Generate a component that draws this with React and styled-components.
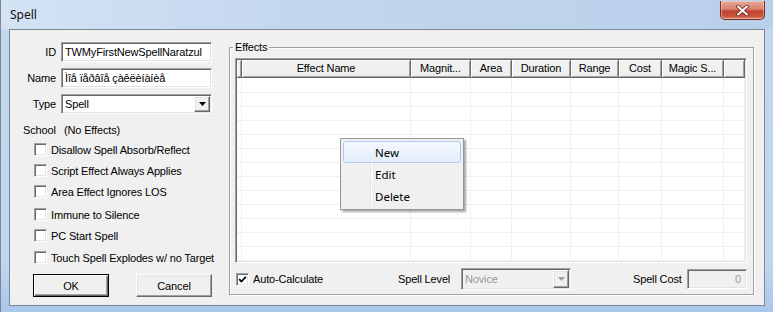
import React from 'react';
import styled, { createGlobalStyle } from 'styled-components';

const Global = createGlobalStyle`
  html, body { margin: 0; padding: 0; overflow: hidden; background: #fff; }
  body { font-family: "Liberation Sans", Arial, sans-serif; font-size: 11px; letter-spacing: -0.15px; color: #000; }
  * { box-sizing: border-box; }
`;

const Window = styled.div`
  position: relative;
  width: 773px;
  height: 312px;
  background: linear-gradient(to bottom, #c5d8ef 0%, #c0d5ee 85%, #a9c7ec 100%);
  border-left: 1px solid #7b8797;
  display: flex;
  flex-direction: column;
  overflow: hidden;
`;

const TitleBar = styled.div`
  height: 29px;
  flex: none;
  display: flex;
  align-items: flex-start;
  background: linear-gradient(to right, #d4e3f4, #c2d6ee 40%, #bad0ea);
`;

const TitleText = styled.div`
  margin: 7px 0 0 9px;
  font-family: "Noto Sans", "Open Sans", sans-serif;
  font-size: 12px;
  letter-spacing: 0;
  line-height: 16px;
  color: #111;
`;

const CloseButton = styled.div`
  margin: 1px 8px 0 auto;
  width: 45px;
  height: 19px;
  border: 1px solid #7a2b22;
  border-top: none;
  border-radius: 0 0 5px 5px;
  background: linear-gradient(to bottom, #e8a996 0%, #d7826f 45%, #c2432f 55%, #c9553f 85%, #d98a6f 100%);
  box-shadow: inset 0 0 0 1px rgba(255, 255, 255, 0.35);
  display: flex;
  align-items: center;
  justify-content: center;
`;

const Client = styled.div`
  margin: 0 8px 0 8px;
  height: 277px;
  border: 1px solid #7d8796;
  background: #f0f0f0;
  display: flex;
  flex: none;
`;

const LeftCol = styled.div`
  width: 219px;
  flex: none;
  display: flex;
  flex-direction: column;
`;

const FormRow = styled.div`
  display: grid;
  grid-template-columns: 46px 151px;
  column-gap: 5px;
  align-items: center;
  margin-top: ${(p) => p.$mt}px;
`;

const Label = styled.div`
  text-align: ${(p) => (p.$align || 'left')};
  line-height: 13px;
  white-space: nowrap;
`;

const Sunken = styled.div`
  position: relative;
  height: ${(p) => p.$h || 20}px;
  border: 1px solid;
  border-color: #a0a0a0 #ffffff #ffffff #a0a0a0;
  box-shadow: inset 1px 1px 0 #696969, inset -1px -1px 0 #e3e3e3;
  background: ${(p) => (p.$disabled ? '#f0f0f0' : '#ffffff')};
  color: ${(p) => (p.$disabled ? '#999' : '#000')};
  display: flex;
  align-items: center;
  justify-content: ${(p) => (p.$right ? 'flex-end' : 'flex-start')};
  padding: ${(p) => (p.$right ? '0 5px 0 0' : '0 0 0 3px')};
  white-space: nowrap;
  overflow: hidden;
`;

const DropBtn = styled.div`
  position: absolute;
  right: 1px;
  top: 1px;
  bottom: 1px;
  width: 16px;
  background: #f0f0f0;
  border: 1px solid;
  border-color: #ffffff #696969 #696969 #ffffff;
  box-shadow: inset -1px -1px 0 #a0a0a0, inset 1px 1px 0 #e3e3e3;
  display: flex;
  align-items: center;
  justify-content: center;
`;

const SchoolLine = styled.div`
  margin-top: 10px;
  padding-left: 13px;
  height: 13px;
  line-height: 13px;
  display: flex;
`;

const SchoolKey = styled.span`
  width: 41px;
`;

const CheckRow = styled.div`
  display: flex;
  align-items: center;
  gap: 4px;
  height: 13px;
  padding-left: ${(p) => p.$pl ?? 24}px;
  margin-top: ${(p) => p.$mt || 0}px;
  white-space: nowrap;
`;

const Box = styled.span`
  width: 13px;
  height: 13px;
  flex: none;
  border: 1px solid;
  border-color: #a0a0a0 #ffffff #ffffff #a0a0a0;
  box-shadow: inset 1px 1px 0 #696969, inset -1px -1px 0 #e3e3e3;
  background: #fff;
  display: flex;
  align-items: center;
  justify-content: center;
`;

const ButtonRow = styled.div`
  display: flex;
  gap: 27px;
  padding-left: 23px;
  margin-top: 10px;
`;

const Button = styled.div`
  width: 76px;
  height: 23px;
  display: flex;
  align-items: center;
  justify-content: center;
  background: #f0f0f0;
  border: 1px solid;
  border-color: ${(p) => (p.$default ? '#000' : '#fff #696969 #696969 #fff')};
  box-shadow: ${(p) =>
    p.$default
      ? 'inset 1px 1px 0 #fff, inset -1px -1px 0 #696969, inset -2px -2px 0 #a0a0a0'
      : 'inset -1px -1px 0 #a0a0a0, inset 1px 1px 0 #e3e3e3'};
`;

const Group = styled.div`
  position: relative;
  margin-top: 17px;
  width: 525px;
  height: 248px;
  border: 1px solid #a0a0a0;
  box-shadow: inset 1px 1px 0 #fff, 1px 1px 0 #fff;
  padding: 10px 6px 0 5px;
  display: flex;
  flex-direction: column;
`;

const GroupLabel = styled.div`
  position: absolute;
  top: -7px;
  left: 3px;
  padding: 0 2px;
  background: #f0f0f0;
  line-height: 13px;
`;

const Table = styled.div`
  width: 512px;
  height: 205px;
  border: 1px solid;
  border-color: #a0a0a0 #ffffff #ffffff #a0a0a0;
  box-shadow: inset 1px 1px 0 #696969, inset -1px -1px 0 #e3e3e3;
  background: #fff;
  padding: 1px;
  overflow: hidden;
`;

const COLS = '5px 169px 60px 41px 59px 48px 43px 62px 1fr';

const HeaderRow = styled.div`
  display: grid;
  grid-template-columns: ${COLS};
  height: 18px;
`;

const HeadCell = styled.div`
  background: #f0f0f0;
  border-right: 1px solid #696969;
  border-bottom: 1px solid #696969;
  box-shadow: inset 1px 1px 0 #fff, inset -1px -1px 0 #a0a0a0;
  display: flex;
  align-items: center;
  justify-content: center;
  white-space: nowrap;
  overflow: hidden;
  line-height: 13px;
`;

const BodyRow = styled.div`
  display: grid;
  grid-template-columns: ${COLS};
  height: ${(p) => p.$h}px;
`;

const BodyCell = styled.div`
  border-right: 1px solid #f0f0f0;
  border-bottom: 1px solid #f0f0f0;
`;

const BottomRow = styled.div`
  margin-top: 5px;
  height: 22px;
  display: grid;
  grid-template-columns: 163px 63px 110px 1fr 54px 60px;
  align-items: center;
`;

const Menu = styled.div`
  position: absolute;
  left: 339px;
  top: 138px;
  width: 124px;
  height: 72px;
  background: #f0f0f0;
  border: 1px solid #979797;
  box-shadow: 2px 2px 2px rgba(0, 0, 0, 0.35);
  padding: 2px;
  display: flex;
  flex-direction: column;
  &::before {
    content: '';
    position: absolute;
    left: 29px;
    top: 2px;
    bottom: 2px;
    width: 1px;
    background: #e2e3e3;
    box-shadow: 1px 0 0 #fff;
  }
`;

const MenuItem = styled.div`
  position: relative;
  z-index: 1;
  height: 22px;
  display: flex;
  align-items: center;
  padding-left: 31px;
  font-family: "Noto Sans", "Open Sans", sans-serif;
  font-size: 11.5px;
  letter-spacing: 0;
  border: 1px solid ${(p) => (p.$hot ? '#aecbef' : 'transparent')};
  border-radius: 3px;
  background: ${(p) => (p.$hot ? 'linear-gradient(to bottom, #f5f9fe, #e3edfa)' : 'transparent')};
`;

const Arrow = ({ color = '#000' }) => (
  <svg width="7" height="4" viewBox="0 0 7 4">
    <polygon points="0,0 7,0 3.5,4" fill={color} />
  </svg>
);

const CheckBox = ({ checked }) => (
  <Box>
    {checked && (
      <svg width="9" height="9" viewBox="0 0 9 9">
        <polyline points="1.2,4.2 3.4,6.5 7.8,1.8" fill="none" stroke="#000" strokeWidth="1.8" />
      </svg>
    )}
  </Box>
);

const columns = ['', 'Effect Name', 'Magnit...', 'Area', 'Duration', 'Range', 'Cost', 'Magic S...', ''];

const flags = [
  ['Disallow Spell Absorb/Reflect', 6],
  ['Script Effect Always Applies', 8],
  ['Area Effect Ignores LOS', 8],
  ['Immune to Silence', 10],
  ['PC Start Spell', 8],
  ['Touch Spell Explodes w/ no Target', 9],
];

export default function App() {
  const rows = Array.from({ length: 14 }, (_, i) => i);
  return (
    <>
      <Global />
      <Window>
        <TitleBar>
          <TitleText>Spell</TitleText>
          <CloseButton>
            <svg width="13" height="11" viewBox="0 0 13 11">
              <path d="M2 1.5 L11 9.5 M11 1.5 L2 9.5" stroke="#6b2018" strokeWidth="3.6" strokeLinecap="round" />
              <path d="M2 1.5 L11 9.5 M11 1.5 L2 9.5" stroke="#fff" strokeWidth="2" strokeLinecap="round" />
            </svg>
          </CloseButton>
        </TitleBar>
        <Client>
          <LeftCol>
            <FormRow $mt={12}>
              <Label $align="right">ID</Label>
              <Sunken>TWMyFirstNewSpellNaratzul</Sunken>
            </FormRow>
            <FormRow $mt={6}>
              <Label $align="right">Name</Label>
              <Sunken>Ìîå ïåðâîå çàêëèíàíèå</Sunken>
            </FormRow>
            <FormRow $mt={6}>
              <Label $align="right">Type</Label>
              <Sunken>
                Spell
                <DropBtn>
                  <Arrow />
                </DropBtn>
              </Sunken>
            </FormRow>
            <SchoolLine>
              <SchoolKey>School</SchoolKey>
              <span>(No Effects)</span>
            </SchoolLine>
            {flags.map(([text, mt]) => (
              <CheckRow key={text} $mt={mt}>
                <CheckBox />
                <span>{text}</span>
              </CheckRow>
            ))}
            <ButtonRow>
              <Button $default>OK</Button>
              <Button>Cancel</Button>
            </ButtonRow>
          </LeftCol>
          <Group>
            <GroupLabel>Effects</GroupLabel>
            <Table>
              <HeaderRow>
                {columns.map((c, i) => (
                  <HeadCell key={i}>{c}</HeadCell>
                ))}
              </HeaderRow>
              {rows.map((r) => (
                <BodyRow key={r} $h={r === 0 ? 15 : 14}>
                  {columns.map((c, i) => (
                    <BodyCell key={i} />
                  ))}
                </BodyRow>
              ))}
            </Table>
            <BottomRow>
              <CheckRow $pl={1}>
                <CheckBox checked />
                <span>Auto-Calculate</span>
              </CheckRow>
              <Label>Spell Level</Label>
              <Sunken $h={22} $disabled>
                Novice
                <DropBtn>
                  <Arrow color="#a0a0a0" />
                </DropBtn>
              </Sunken>
              <span />
              <Label>Spell Cost</Label>
              <Sunken $h={20} $disabled $right>
                0
              </Sunken>
            </BottomRow>
          </Group>
        </Client>
        <Menu>
          <MenuItem $hot>New</MenuItem>
          <MenuItem>Edit</MenuItem>
          <MenuItem>Delete</MenuItem>
        </Menu>
      </Window>
    </>
  );
}
